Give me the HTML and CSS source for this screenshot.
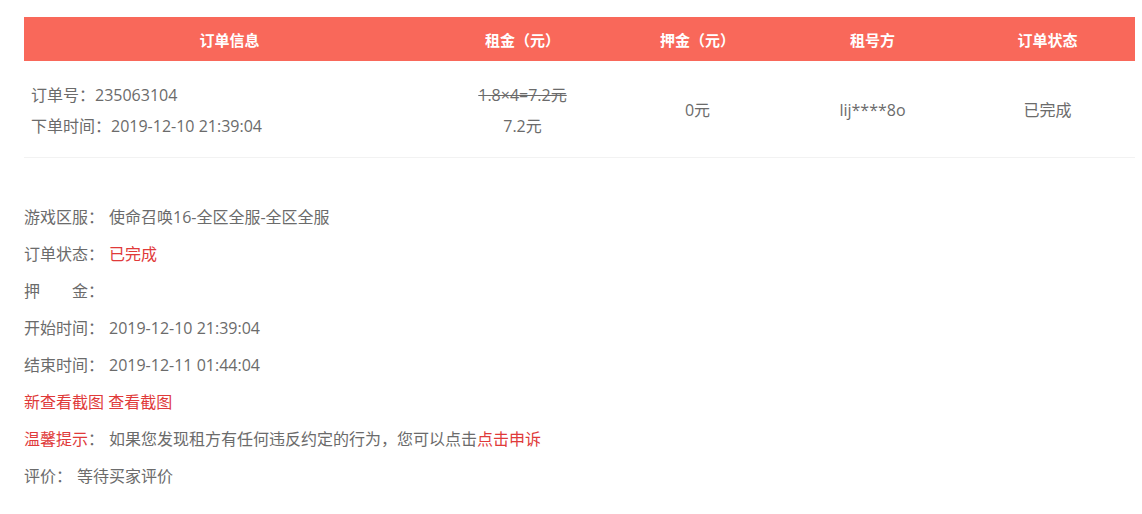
FILE: index.html
```html
<!DOCTYPE html>
<html lang="zh">
<head>
<meta charset="utf-8">
<title>订单详情</title>
<link rel="stylesheet" href="styles.css">
</head>
<body>
<div class="page">
  <div class="order-table">
    <div class="thead">
      <div class="th">订单信息</div>
      <div class="th">租金（元）</div>
      <div class="th">押金（元）</div>
      <div class="th">租号方</div>
      <div class="th">订单状态</div>
    </div>
    <div class="trow">
      <div class="td td-info">
        <p>订单号：235063104</p>
        <p>下单时间：2019-12-10 21:39:04</p>
      </div>
      <div class="td td-stack">
        <p class="strike">1.8×4=7.2元</p>
        <p>7.2元</p>
      </div>
      <div class="td">0元</div>
      <div class="td">lij****8o</div>
      <div class="td">已完成</div>
    </div>
  </div>

  <ul class="details">
    <li><span class="label">游戏区服：</span>使命召唤16-全区全服-全区全服</li>
    <li><span class="label">订单状态：</span><span class="red">已完成</span></li>
    <li><span class="label">押　　金：</span></li>
    <li><span class="label">开始时间：</span>2019-12-10 21:39:04</li>
    <li><span class="label">结束时间：</span>2019-12-11 01:44:04</li>
    <li class="red">新查看截图 查看截图</li>
    <li><span class="label"><span class="red">温馨提示</span>：</span>如果您发现租方有任何违反约定的行为，您可以点击<span class="red">点击申诉</span></li>
    <li><span class="label">评价：</span>等待买家评价</li>
  </ul>
</div>
</body>
</html>
```

FILE: styles.css
```css
* { box-sizing: border-box; }
html, body { margin: 0; padding: 0; background: #fff; }
body {
  font-family: "Open Sans", "Noto Sans CJK SC", "Noto Sans", sans-serif;
  color: #6b6b6b;
  font-size: 16px;
}
p { margin: 0; }
.page {
  padding: 17px 0 0 24px;
  width: 1135px;
}
.order-table { width: 1111px; }
.thead, .trow {
  display: grid;
  grid-template-columns: 411px 175px 175px 175px 175px;
}
.thead {
  background: #f9685a;
  height: 44px;
  align-items: center;
}
.th {
  color: #fff;
  font-weight: bold;
  font-size: 15px;
  text-align: center;
}
.trow {
  height: 97px;
  padding-top: 3px;
  align-items: center;
  border-bottom: 1px solid #f2f2f2;
}
.td {
  text-align: center;
  line-height: 31px;
}
.td-info {
  text-align: left;
  padding-left: 7px;
}
.strike { text-decoration: line-through; }
.details {
  list-style: none;
  margin: 41px 0 0 0;
  padding: 0;
}
.details li {
  line-height: 37px;
  height: 37px;
  white-space: nowrap;
}
.label { margin-right: 5px; }
.red { color: #e03a3a; }
```
